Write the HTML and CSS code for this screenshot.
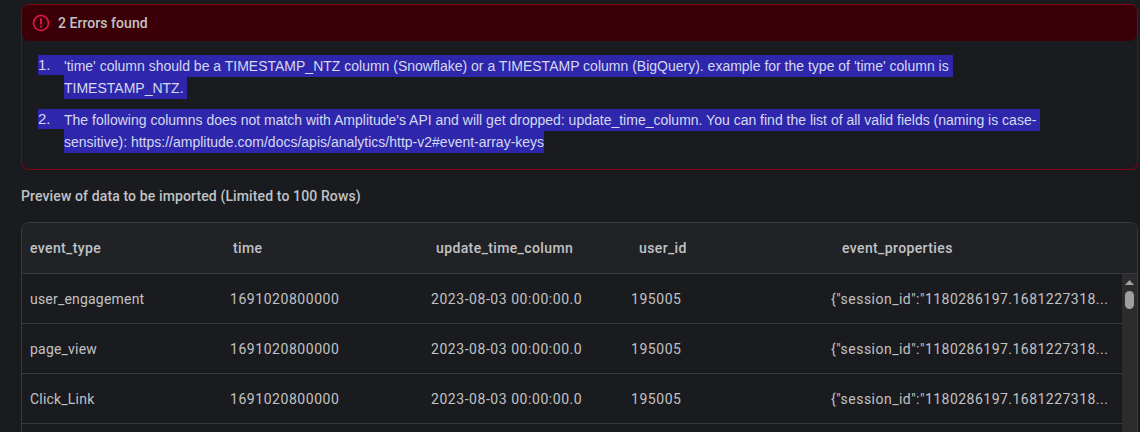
FILE: index.html
```html
<!doctype html>
<html>
<head>
    <meta charset="utf-8" />
    <title>Import preview</title>
    <link rel="stylesheet" href="styles.css">
</head>

<body>
    <div class="errors">
        <div class="errors-head">
            <svg class="errors-icon" width="18" height="18" viewBox="0 0 18 18" fill="none">
                <circle cx="9" cy="9" r="7.5" stroke="#e8174b" stroke-width="1.6" />
                <path d="M9 4.8v5" stroke="#e8174b" stroke-width="1.8" stroke-linecap="round" />
                <circle cx="9" cy="12.8" r="1" fill="#e8174b" />
            </svg>
            <span>2 Errors found</span>
        </div>
        <ol class="errors-list">
            <li class="error">
                <span class="error-num">1.</span>
                <div class="error-text">
                    <span class="sel">'time' column should be a TIMESTAMP_NTZ column (Snowflake) or a TIMESTAMP column (BigQuery). example for the type of 'time' column is&nbsp;</span>
                    <span class="sel">TIMESTAMP_NTZ.&nbsp;</span>
                </div>
            </li>
            <li class="error">
                <span class="error-num">2.</span>
                <div class="error-text">
                    <span class="sel">The following columns does not match with Amplitude's API and will get dropped: update_time_column. You can find the list of all valid fields (naming is case-&nbsp;</span>
                    <span class="sel">sensitive): https://amplitude.com/docs/apis/analytics/http-v2#event-array-keys</span>
                </div>
            </li>
        </ol>
    </div>

    <div class="preview-title">Preview of data to be imported (Limited to 100 Rows)</div>

    <div class="preview">
        <div class="preview-head">
            <div>event_type</div>
            <div>time</div>
            <div>update_time_column</div>
            <div>user_id</div>
            <div>event_properties</div>
        </div>
        <div class="preview-body">
            <div class="rows">
                <div class="row">
                    <div>user_engagement</div>
                    <div class="num">1691020800000</div>
                    <div class="num">2023-08-03 00:00:00.0</div>
                    <div class="num">195005</div>
                    <div class="cell-long">{"session_id":"1180286197.1681227318...</div>
                </div>
                <div class="row">
                    <div>page_view</div>
                    <div class="num">1691020800000</div>
                    <div class="num">2023-08-03 00:00:00.0</div>
                    <div class="num">195005</div>
                    <div class="cell-long">{"session_id":"1180286197.1681227318...</div>
                </div>
                <div class="row">
                    <div>Click_Link</div>
                    <div class="num">1691020800000</div>
                    <div class="num">2023-08-03 00:00:00.0</div>
                    <div class="num">195005</div>
                    <div class="cell-long">{"session_id":"1180286197.1681227318...</div>
                </div>
                <div class="row"></div>
            </div>
            <div class="scrollbar">
                <svg class="scroll-arrow" width="9" height="5" viewBox="0 0 9 5">
                    <path d="M4.5 0L9 5H0z" fill="#a3a3a3" />
                </svg>
                <div class="scroll-thumb"></div>
            </div>
        </div>
    </div>
</body>

</html>
```

FILE: styles.css
```css
:root {
    --bg: #1a1b1e;
    --line: #373a40;
    --text: #c1c2c5;
}
html, body {
    background-color: var(--bg);
}
body {
    margin: 0;
    height: 432px;
    overflow: hidden;
    color: var(--text);
    font-family: 'Roboto', sans-serif;
    font-size: 14px;
}

.errors {
    margin: 4px 2px 0 21px;
    height: 166px;
    box-sizing: border-box;
    border: 1px solid #8b0010;
    border-radius: 8px;
}
.errors-head {
    height: 36px;
    padding-left: 10px;
    display: flex;
    align-items: center;
    gap: 8px;
    background-color: #3b0007;
    border-radius: 7px 7px 8px 8px;
    font-size: 14px;
    font-weight: 500;
    letter-spacing: 0.05px;
}
.errors-list {
    margin: 14px 0 0 16px;
    padding: 0;
    list-style: none;
    font-family: 'Liberation Sans', sans-serif;
    font-size: 14px;
    line-height: 22px;
    color: #d3d9f0;
}
.error {
    display: flex;
    margin-bottom: 10px;
}
.error-num {
    width: 26px;
    height: 20px;
    line-height: 20px;
    background-color: #2f27ab;
    font-size: 15px;
}
.sel {
    display: block;
    width: fit-content;
    background-color: #2f27ab;
    white-space: nowrap;
}

.preview-title {
    margin: 17px 0 0 21px;
    font-size: 14px;
    font-weight: 500;
    line-height: 18px;
    letter-spacing: 0.12px;
}

.preview {
    margin: 17px 2px 0 21px;
    border: 1px solid var(--line);
    border-radius: 8px 8px 0 0;
}
.preview-head {
    height: 50px;
    display: grid;
    grid-template-columns: repeat(4, 203px) 1fr;
    align-items: center;
    padding-left: 8px;
    background-color: #212225;
    border-bottom: 1px solid var(--line);
    border-radius: 8px 8px 0 0;
    font-size: 14px;
    font-weight: 500;
    letter-spacing: 0.38px;
}
.preview-body {
    display: flex;
}
.rows {
    flex-grow: 1;
}
.row {
    height: 49px;
    display: grid;
    grid-template-columns: 200px 201px 200px 200px 1fr;
    align-items: center;
    padding-left: 8px;
    border-bottom: 1px solid var(--line);
    letter-spacing: 0.2px;
}
.num {
    letter-spacing: 0.55px;
}
.cell-long {
    white-space: nowrap;
    letter-spacing: 0.47px;
}

.scrollbar {
    width: 15px;
    height: 160px;
    display: flex;
    flex-direction: column;
    align-items: center;
    background-color: #2c2c2c;
}
.scroll-arrow {
    margin-top: 6px;
}
.scroll-thumb {
    width: 9px;
    height: 18px;
    margin-top: 6px;
    border-radius: 5px;
    background-color: #9f9f9f;
}
```
